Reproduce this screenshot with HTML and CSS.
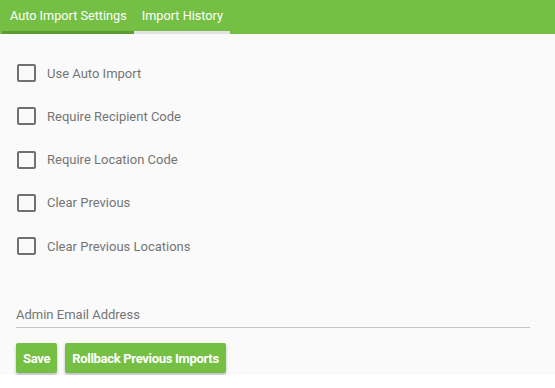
FILE: index.html
```html
<!DOCTYPE html>
<html lang="en">
<head>
    <meta charset="UTF-8">
    <title>Auto Import Settings</title>
    <link rel="stylesheet" href="styles.css">
</head>
<body>
    <div class="tabs">
        <div class="tab active">Auto Import Settings</div>
        <div class="tab">Import History</div>
    </div>

    <div class="panel">
        <label class="check"><input type="checkbox"><span class="box"></span>Use Auto Import</label>
        <label class="check"><input type="checkbox"><span class="box"></span>Require Recipient Code</label>
        <label class="check"><input type="checkbox"><span class="box"></span>Require Location Code</label>
        <label class="check"><input type="checkbox"><span class="box"></span>Clear Previous</label>
        <label class="check"><input type="checkbox"><span class="box"></span>Clear Previous Locations</label>

        <input type="text" class="email" placeholder="Admin Email Address">

        <div class="actions">
            <button class="btn">Save</button>
            <button class="btn">Rollback Previous Imports</button>
        </div>
    </div>
</body>
</html>
```

FILE: styles.css
```css
* {
    margin: 0;
    padding: 0;
    box-sizing: border-box;
}

body {
    font-family: Roboto, Arial, sans-serif;
    background-color: #ffffff;
}

.tabs {
    display: flex;
    height: 34px;
    padding-left: 2px;
    background-color: #74bf44;
}

.tab {
    color: #ffffff;
    font-size: 12.7px;
    line-height: 31px;
    padding: 0 7px 0 8px;
    border-bottom: 3px solid #e1e3e7;
}

.tab.active {
    border-bottom-color: #5c9c33;
}

.panel {
    background-color: #fafafa;
    padding: 30px 16px 2px 17px;
}

.check {
    display: flex;
    align-items: center;
    height: 18px;
    margin-bottom: 25.3px;
    font-size: 13px;
    color: #757575;
    cursor: pointer;
}

.check input {
    display: none;
}

.box {
    width: 19px;
    height: 18px;
    border: 2px solid #707070;
    border-radius: 2px;
    margin-right: 11px;
}

.email {
    display: block;
    width: 514px;
    margin: 46px 0 0 -1px;
    padding: 6px 0 5px 0;
    border: none;
    border-bottom: 1px solid #c6c6c6;
    background: transparent;
    font-family: Roboto, Arial, sans-serif;
    font-size: 13px;
    color: #757575;
    outline: none;
}

.email::placeholder {
    color: #757575;
}

.actions {
    display: flex;
    gap: 8px;
    margin: 15px 0 0 -1px;
}

.btn {
    height: 30px;
    padding: 0 7px;
    border: none;
    border-radius: 2px;
    background-color: #74bf44;
    color: #ffffff;
    font-family: Roboto, Arial, sans-serif;
    font-size: 13px;
    font-weight: bold;
    letter-spacing: -0.3px;
    box-shadow: 0 2px 3px rgba(0, 0, 0, 0.25);
    cursor: pointer;
}
```
